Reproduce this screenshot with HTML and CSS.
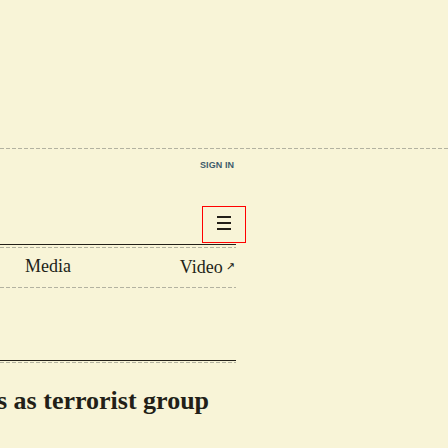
FILE: index.html
```
<!DOCTYPE html>
<html>
<head>
<meta charset="utf-8">
<link rel="stylesheet" href="styles.css">
</head>
<body>
<div class="page">
  <div class="top-space"></div>
  <div class="dash full"></div>
  <div class="signin-row"><a class="signin">SIGN IN</a></div>
  <div class="menu-row">
    <button class="menu-btn" aria-label="Menu">
      <svg width="14" height="14" viewBox="0 0 14 14"><rect x="0" y="0" width="14" height="2" fill="#221f18"/><rect x="0" y="6" width="14" height="2" fill="#221f18"/><rect x="0" y="12" width="14" height="2" fill="#221f18"/></svg>
    </button>
  </div>
  <div class="col">
    <div class="solid"></div>
    <div class="dash"></div>
    <nav class="nav-row">
      <span class="nav-item">Media</span>
      <span class="nav-item">Video<span class="arrow">↗</span></span>
    </nav>
    <div class="dash"></div>
    <div class="solid lower"></div>
    <div class="dash"></div>
    <h1 class="headline">s as terrorist group</h1>
  </div>
</div>
</body>
</html>
```
FILE: styles.css
```
html, body {
  margin: 0;
  background: #f8f4d7;
}
.page {
  width: 448px;
  height: 448px;
  overflow: hidden;
}
.top-space {
  height: 148px;
}
.dash {
  height: 1px;
  background: repeating-linear-gradient(90deg, #b3b2a0 0 4px, transparent 4px 6px);
}
.signin-row {
  height: 57px;
  box-sizing: border-box;
  padding: 11px 0 0 200px;
}
.signin {
  display: block;
  font: bold 9px/10px "Liberation Sans", Arial, sans-serif;
  color: #3e5b6b;
  letter-spacing: 0.1px;
}
.menu-row {
  display: flex;
  justify-content: center;
  height: 37px;
}
.menu-btn {
  width: 44px;
  height: 37px;
  box-sizing: border-box;
  border: 1.5px solid #ff0000;
  background: transparent;
  padding: 9px 0 0 0;
  margin: 0;
  display: flex;
  justify-content: center;
  align-items: flex-start;
}
.col {
  width: 236px;
}
.solid {
  height: 1px;
  background: #221f18;
  margin-top: 1px;
  margin-bottom: 2px;
}
.solid.lower {
  margin-top: 72px;
  margin-bottom: 1px;
}
.nav-row {
  display: flex;
  justify-content: space-between;
  padding: 0 1px 2px 25px;
  height: 39px;
  box-sizing: border-box;
  font: 18px/37px "Liberation Serif", "Times New Roman", serif;
  color: #221f18;
}
.arrow {
  font-family: "DejaVu Sans", sans-serif;
  font-size: 11px;
  margin-left: 3px;
  vertical-align: 3px;
}
.headline {
  margin: 22px 0 0 -3px;
  font: bold 26px/31px "Liberation Serif", "Times New Roman", serif;
  color: #221f18;
  white-space: nowrap;
}
```
